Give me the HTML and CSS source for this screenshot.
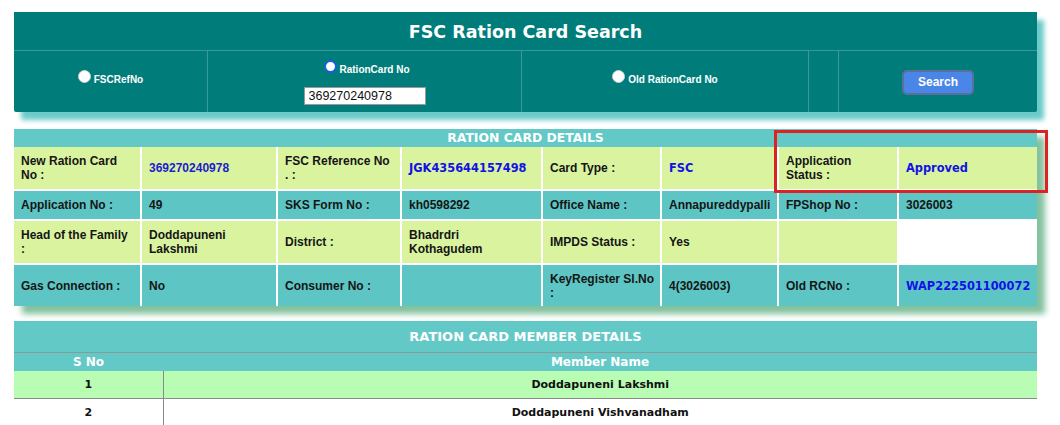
FILE: index.html
```html
<!DOCTYPE html>
<html>
<head>
<meta charset="utf-8">
<link rel="stylesheet" href="styles.css">
</head>
<body>
<div class="page">
  <div class="search-box">
    <div class="search-title">FSC Ration Card Search</div>
    <div class="search-row">
      <div class="s-cell"><label class="opt"><input type="radio" name="t"> FSCRefNo</label></div>
      <div class="s-cell stack">
        <label class="opt"><input type="radio" name="t" checked> RationCard No</label>
        <input class="txt" type="text" value="369270240978">
      </div>
      <div class="s-cell"><label class="opt"><input type="radio" name="t"> Old RationCard No</label></div>
      <div class="s-cell"></div>
      <div class="s-cell"><button class="btn">Search</button></div>
    </div>
  </div>

  <div class="details-wrap">
    <table class="details">
      <colgroup>
        <col style="width:127px"><col style="width:136px"><col style="width:124px"><col style="width:141px">
        <col style="width:119px"><col style="width:117px"><col style="width:120px"><col style="width:139px">
      </colgroup>
      <tr class="hd"><th colspan="8">RATION CARD DETAILS</th></tr>
      <tr class="y r1">
        <td class="lb">New Ration Card No :</td>
        <td class="v blue-a">369270240978</td>
        <td class="lb">FSC Reference No . :</td>
        <td class="v blue-d">JGK435644157498</td>
        <td class="lb">Card Type :</td>
        <td class="v blue-d">FSC</td>
        <td class="lb">Application Status :</td>
        <td class="v blue-d">Approved</td>
      </tr>
      <tr class="t r2">
        <td class="lb">Application No :</td>
        <td class="v">49</td>
        <td class="lb">SKS Form No :</td>
        <td class="v">kh0598292</td>
        <td class="lb">Office Name :</td>
        <td class="v">Annapureddypalli</td>
        <td class="lb">FPShop No :</td>
        <td class="v">3026003</td>
      </tr>
      <tr class="y r3">
        <td class="lb">Head of the Family :</td>
        <td class="v">Doddapuneni Lakshmi</td>
        <td class="lb">District :</td>
        <td class="v">Bhadrdri Kothagudem</td>
        <td class="lb">IMPDS Status :</td>
        <td class="v">Yes</td>
        <td class="lb"></td>
        <td class="v white"></td>
      </tr>
      <tr class="t r4">
        <td class="lb">Gas Connection :</td>
        <td class="v">No</td>
        <td class="lb">Consumer No :</td>
        <td class="v"></td>
        <td class="lb tight">KeyRegister Sl.No :</td>
        <td class="v">4(3026003)</td>
        <td class="lb">Old RCNo :</td>
        <td class="v blue-d">WAP222501100072</td>
      </tr>
    </table>
    <div class="highlight"></div>
  </div>

  <table class="members">
    <colgroup><col style="width:149px"><col style="width:874px"></colgroup>
    <tr class="m-hd"><th colspan="2">RATION CARD MEMBER DETAILS</th></tr>
    <tr class="m-sub"><th>S No</th><th>Member Name</th></tr>
    <tr class="m-row g"><td>1</td><td>Doddapuneni Lakshmi</td></tr>
    <tr class="m-row"><td>2</td><td>Doddapuneni Vishvanadham</td></tr>
  </table>
</div>
</body>
</html>
```

FILE: styles.css
```css
html, body {
  margin: 0;
  padding: 0;
  background: #fff;
  font-family: "Liberation Sans", Arial, sans-serif;
}
.page {
  padding: 12px 0 0 14px;
  width: 1023px;
}
.search-box {
  width: 1023px;
  background: #007d7b;
  box-shadow: 7px 8px 5px #6ccaca;
  border-radius: 0 0 2px 2px;
}
.search-title {
  height: 37px;
  border-bottom: 1px solid #3b9a99;
  color: #fff;
  font-weight: bold;
  font-family: "DejaVu Sans", Verdana, sans-serif;
  font-size: 17.5px;
  display: flex;
  align-items: center;
  justify-content: center;
  padding-top: 1px;
}
.search-row {
  display: grid;
  grid-template-columns: 193px 314px 287px 30px 199px;
  height: 61px;
}
.s-cell {
  border-left: 1px solid #3b9a99;
  display: flex;
  align-items: center;
  justify-content: center;
}
.s-cell:first-child { border-left: 0; }
.s-cell.stack {
  flex-direction: column;
  justify-content: flex-start;
  padding-top: 12px;
  gap: 11px;
}
.opt {
  color: #fff;
  font-weight: bold;
  font-size: 10px;
  display: flex;
  align-items: center;
  gap: 3px;
  margin-top: -5px;
}
.stack .opt { margin-top: 0; margin-left: 4px; }
.opt input {
  appearance: none;
  -webkit-appearance: none;
  width: 13px;
  height: 13px;
  margin: 0;
  border-radius: 50%;
  background: #fff;
  border: 1px solid #d0d0d0;
  box-sizing: border-box;
  position: relative;
  top: -3px;
}
.opt input:checked {
  border: 2px solid #1a5fe0;
  background: #fff;
}
.txt {
  width: 122px;
  height: 18px;
  box-sizing: border-box;
  border: 1px solid #9a9a9a;
  padding: 0 4px;
  font-family: "Liberation Sans", Arial, sans-serif;
  font-size: 12.5px;
  color: #111;
  background: #fff;
}
.btn {
  width: 72px;
  height: 25px;
  background: #4a86e8;
  border: 2px solid #5b6f9c;
  border-radius: 5px;
  color: #fff;
  font-weight: bold;
  font-size: 12px;
  font-family: "Liberation Sans", Arial, sans-serif;
  margin-top: 1px;
}

.details-wrap {
  position: relative;
  margin-top: 17px;
  width: 1023px;
}
.details {
  width: 1023px;
  table-layout: fixed;
  border-collapse: collapse;
  box-shadow: 8px 8px 6px #84c29e;
}
.details th, .details td {
  padding: 0 10px 0 7px;
  text-align: left;
  vertical-align: middle;
  line-height: 14px;
}
.details .hd th {
  background: #63c9c7;
  color: #fff;
  text-align: center;
  font-family: "DejaVu Sans", Verdana, sans-serif;
  font-size: 12.4px;
  font-weight: bold;
  height: 18px;
  padding: 0;
  line-height: 18px;
}
.details td {
  border-left: 2px solid #fff;
  border-top: 2px solid #fff;
  font-size: 12px;
  font-weight: bold;
  color: #151515;
}
.details td.v { padding-right: 8px; }
.details td.lb.tight { padding-right: 3px; }
.details td:first-child { border-left: 0; }
.details tr.r1 td { border-top: 0; }
.details tr.r1 { height: 43px; }
.details tr.r2 { height: 30px; }
.details tr.r3 { height: 44px; }
.details tr.r4 { height: 42px; }
.details tr.y td { background: #daf39f; }
.details tr.t td { background: #5dc5c4; }
.details tr.y td.white { background: #fff; }
.details td.blue-a { color: #1d1dcf; }
.details td.blue-d {
  color: #1212e6;
  font-family: "DejaVu Sans", Verdana, sans-serif;
  font-size: 11.4px;
}
.highlight {
  position: absolute;
  left: 760px;
  top: 1px;
  width: 268px;
  height: 57px;
  border: 3px solid #dc2222;
}

.members {
  margin-top: 15px;
  width: 1023px;
  table-layout: fixed;
  border-collapse: collapse;
  font-family: "DejaVu Sans", Verdana, sans-serif;
  font-weight: bold;
}
.members th {
  background: #63c9c7;
  color: #fff;
  text-align: center;
  padding: 0;
}
.m-hd th {
  height: 31px;
  font-size: 13px;
  border-bottom: 1px solid #8a9a9a;
}
.m-sub th {
  height: 18px;
  font-size: 12px;
  line-height: 18px;
}
.m-row td {
  height: 27px;
  text-align: center;
  font-size: 11px;
  color: #111;
  padding: 0;
}
.m-row td:first-child { border-right: 1px solid #8a8a8a; }
.m-row.g td { background: #b9fdb5; border-bottom: 1px solid #8a8a8a; }
```
